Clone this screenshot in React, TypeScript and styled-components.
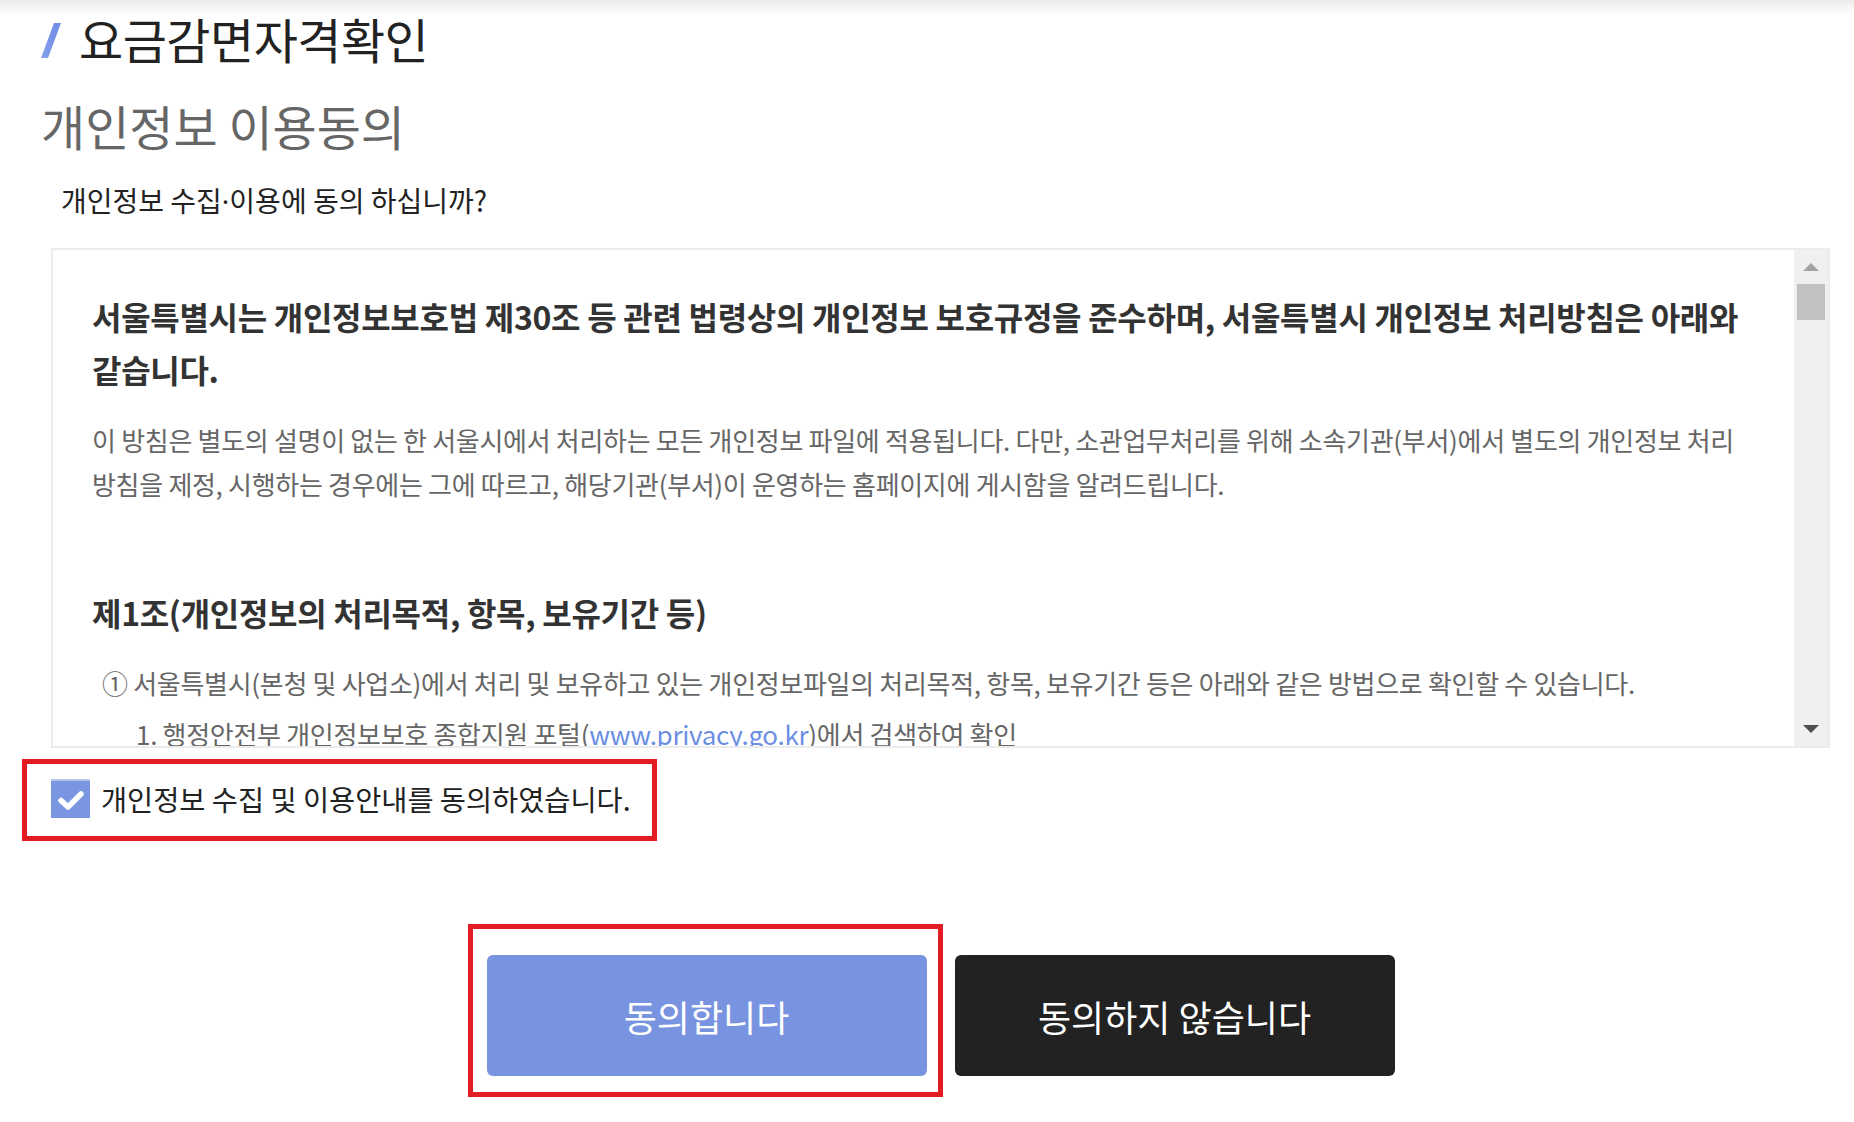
import React, { useState } from "react";
import styled, { createGlobalStyle } from "styled-components";

const GlobalStyle = createGlobalStyle`
  html, body {
    margin: 0;
    padding: 0;
  }
  body {
    background: linear-gradient(to bottom, #ebebeb 0, #ffffff 15px) no-repeat #fff;
    font-family: "Noto Sans CJK KR", "Noto Sans", sans-serif;
    color: #222;
    word-break: keep-all;
  }
`;

const Page = () => {
  const [agreed, setAgreed] = useState(true);

  return (
    <>
      <GlobalStyle />
      <Wrapper>
        <TitleRow>
          <Slash width="20" height="35" viewBox="0 0 20 35" aria-hidden>
            <defs>
              <linearGradient id="slashGrad" x1="1" y1="0" x2="0" y2="1">
                <stop offset="0" stopColor="#6f8ce6" />
                <stop offset="1" stopColor="#86a0ec" />
              </linearGradient>
            </defs>
            <polygon points="13,0 20,0 7,35 0,35" fill="url(#slashGrad)" />
          </Slash>
          <PageTitle>요금감면자격확인</PageTitle>
        </TitleRow>

        <SectionTitle>개인정보 이용동의</SectionTitle>
        <Question>
          개인정보 수집<Dot>·</Dot>이용에 동의 하십니까?
        </Question>

        <PolicyBox>
          <PolicyBody>
            <PolicyLead>
              서울특별시는 개인정보보호법 제30조 등 관련 법령상의 개인정보 보호규정을 준수하며, 서울특별시 개인정보 처리방침은 아래와 같습니다.
            </PolicyLead>
            <PolicyText>
              이 방침은 별도의 설명이 없는 한 서울시에서 처리하는 모든 개인정보 파일에 적용됩니다. 다만, 소관업무처리를 위해 소속기관(부서)에서 별도의 개인정보 처리 방침을 제정, 시행하는 경우에는 그에 따르고, 해당기관(부서)이 운영하는 홈페이지에 게시함을 알려드립니다.
            </PolicyText>

            <ArticleTitle>제1조(개인정보의 처리목적, 항목, 보유기간 등)</ArticleTitle>
            <PolicyText $indent={10}>
              ① 서울특별시(본청 및 사업소)에서 처리 및 보유하고 있는 개인정보파일의 처리목적, 항목, 보유기간 등은 아래와 같은 방법으로 확인할 수 있습니다.
            </PolicyText>
            <PolicyText $indent={44} $gap={7}>
              1. 행정안전부 개인정보보호 종합지원 포털(<Link>www.privacy.go.kr</Link>)에서 검색하여 확인
            </PolicyText>
          </PolicyBody>

          <ScrollTrack>
            <ScrollButton>
              <Arrow $dir="up" $disabled />
            </ScrollButton>
            <ScrollThumb />
            <ScrollSpace />
            <ScrollButton>
              <Arrow $dir="down" />
            </ScrollButton>
          </ScrollTrack>
        </PolicyBox>

        <AgreeCheck onClick={() => setAgreed(!agreed)}>
          <CheckBox $checked={agreed}>
            {agreed && (
              <svg width="28" height="22" viewBox="0 0 28 22" aria-hidden>
                <path
                  d="M4 11.5 L11 18 L24 5"
                  fill="none"
                  stroke="#fff"
                  strokeWidth="5.5"
                  strokeLinecap="round"
                  strokeLinejoin="round"
                />
              </svg>
            )}
          </CheckBox>
          <CheckLabel>개인정보 수집 및 이용안내를 동의하였습니다.</CheckLabel>
        </AgreeCheck>

        <ButtonRow>
          <ActionButton $variant="primary" $highlight>
            동의합니다
          </ActionButton>
          <ActionButton $variant="dark">동의하지 않습니다</ActionButton>
        </ButtonRow>
      </Wrapper>
    </>
  );
};

const Wrapper = styled.div`
  padding: 10px 24px 40px 51px;
`;

const TitleRow = styled.div`
  display: flex;
  align-items: center;
  gap: 18px;
  margin-left: -10px;
`;

const Slash = styled.svg`
  flex: none;
  margin-top: 4px;
`;

const PageTitle = styled.h1`
  margin: 0;
  font-size: 48px;
  line-height: 56px;
  font-weight: 400;
  color: #222;
  letter-spacing: -0.5px;
`;

const SectionTitle = styled.h2`
  margin: 29px 0 0 -10px;
  font-size: 48px;
  line-height: 60px;
  font-weight: 400;
  color: #666;
`;

const Question = styled.p`
  margin: 27px 0 0 10px;
  font-size: 28px;
  line-height: 36px;
  color: #222;
`;

const Dot = styled.span`
  font-family: "Noto Sans", sans-serif;
`;

const PolicyBox = styled.div`
  display: flex;
  height: 500px;
  margin-top: 29px;
  border: 2px solid #ececec;
  box-sizing: border-box;
  background: #fff;
`;

const PolicyBody = styled.div`
  flex: 1;
  min-width: 0;
  overflow: hidden;
  padding: 40px 30px 0 39px;
`;

const PolicyLead = styled.p`
  margin: 0;
  font-size: 32px;
  line-height: 53px;
  font-weight: 700;
  color: #333;
  letter-spacing: -0.3px;
`;

const PolicyText = styled.p<{ $indent?: number; $gap?: number }>`
  margin: ${(p) => p.$gap ?? 22}px 0 0 ${(p) => p.$indent ?? 0}px;
  font-size: 26px;
  line-height: 44px;
  letter-spacing: -0.3px;
  color: #666;
`;

const ArticleTitle = styled.h3`
  margin: 80px 0 0;
  font-size: 32px;
  line-height: 53px;
  font-weight: 700;
  color: #333;
  letter-spacing: -0.3px;
`;

const Link = styled.a`
  color: #6b8ee3;
  text-decoration: none;
`;

const ScrollTrack = styled.div`
  flex: none;
  width: 34px;
  display: flex;
  flex-direction: column;
  background: #f0f0f0;
`;

const ScrollButton = styled.div`
  height: 34px;
  display: flex;
  align-items: center;
  justify-content: center;
`;

const Arrow = styled.span<{ $dir: "up" | "down"; $disabled?: boolean }>`
  width: 0;
  height: 0;
  border-left: 8px solid transparent;
  border-right: 8px solid transparent;
  ${(p) =>
    p.$dir === "up"
      ? `border-bottom: 8px solid ${p.$disabled ? "#a3a3a3" : "#505050"};`
      : `border-top: 8px solid ${p.$disabled ? "#a3a3a3" : "#505050"};`}
`;

const ScrollThumb = styled.div`
  height: 36px;
  margin: 0 3px;
  background: #c1c1c1;
`;

const ScrollSpace = styled.div`
  flex: 1;
`;

const AgreeCheck = styled.label`
  display: flex;
  width: fit-content;
  align-items: center;
  gap: 11px;
  margin: 11px 0 0 -29px;
  padding: 15px 21px 18px 24px;
  border: 5px solid #e31c23;
  cursor: pointer;
`;

const CheckBox = styled.span<{ $checked: boolean }>`
  display: flex;
  align-items: center;
  justify-content: center;
  width: 39px;
  height: 39px;
  box-sizing: border-box;
  border-top: 2px solid #b7c4e8;
  background: ${(p) => (p.$checked ? "#7b96e0" : "#fff")};
`;

const CheckLabel = styled.span`
  font-size: 28.4px;
  line-height: 38px;
  color: #222;
`;

const ButtonRow = styled.div`
  display: flex;
  justify-content: center;
  gap: 28px;
  margin-top: 114px;
`;

const ActionButton = styled.button<{ $variant: "primary" | "dark"; $highlight?: boolean }>`
  position: relative;
  width: 440px;
  height: 121px;
  border: 0;
  border-radius: 6px;
  font-family: "Noto Sans CJK KR", "Noto Sans", sans-serif;
  font-size: 36px;
  color: #fff;
  cursor: pointer;
  background: ${(p) => (p.$variant === "primary" ? "#7894e0" : "#222222")};

  ${(p) =>
    p.$highlight &&
    `
    &::after {
      content: "";
      position: absolute;
      top: -31px;
      bottom: -21px;
      left: -19px;
      right: -16px;
      border: 5px solid #e31c23;
      pointer-events: none;
    }
  `}
`;

export default function App() {
  return <Page />;
}
